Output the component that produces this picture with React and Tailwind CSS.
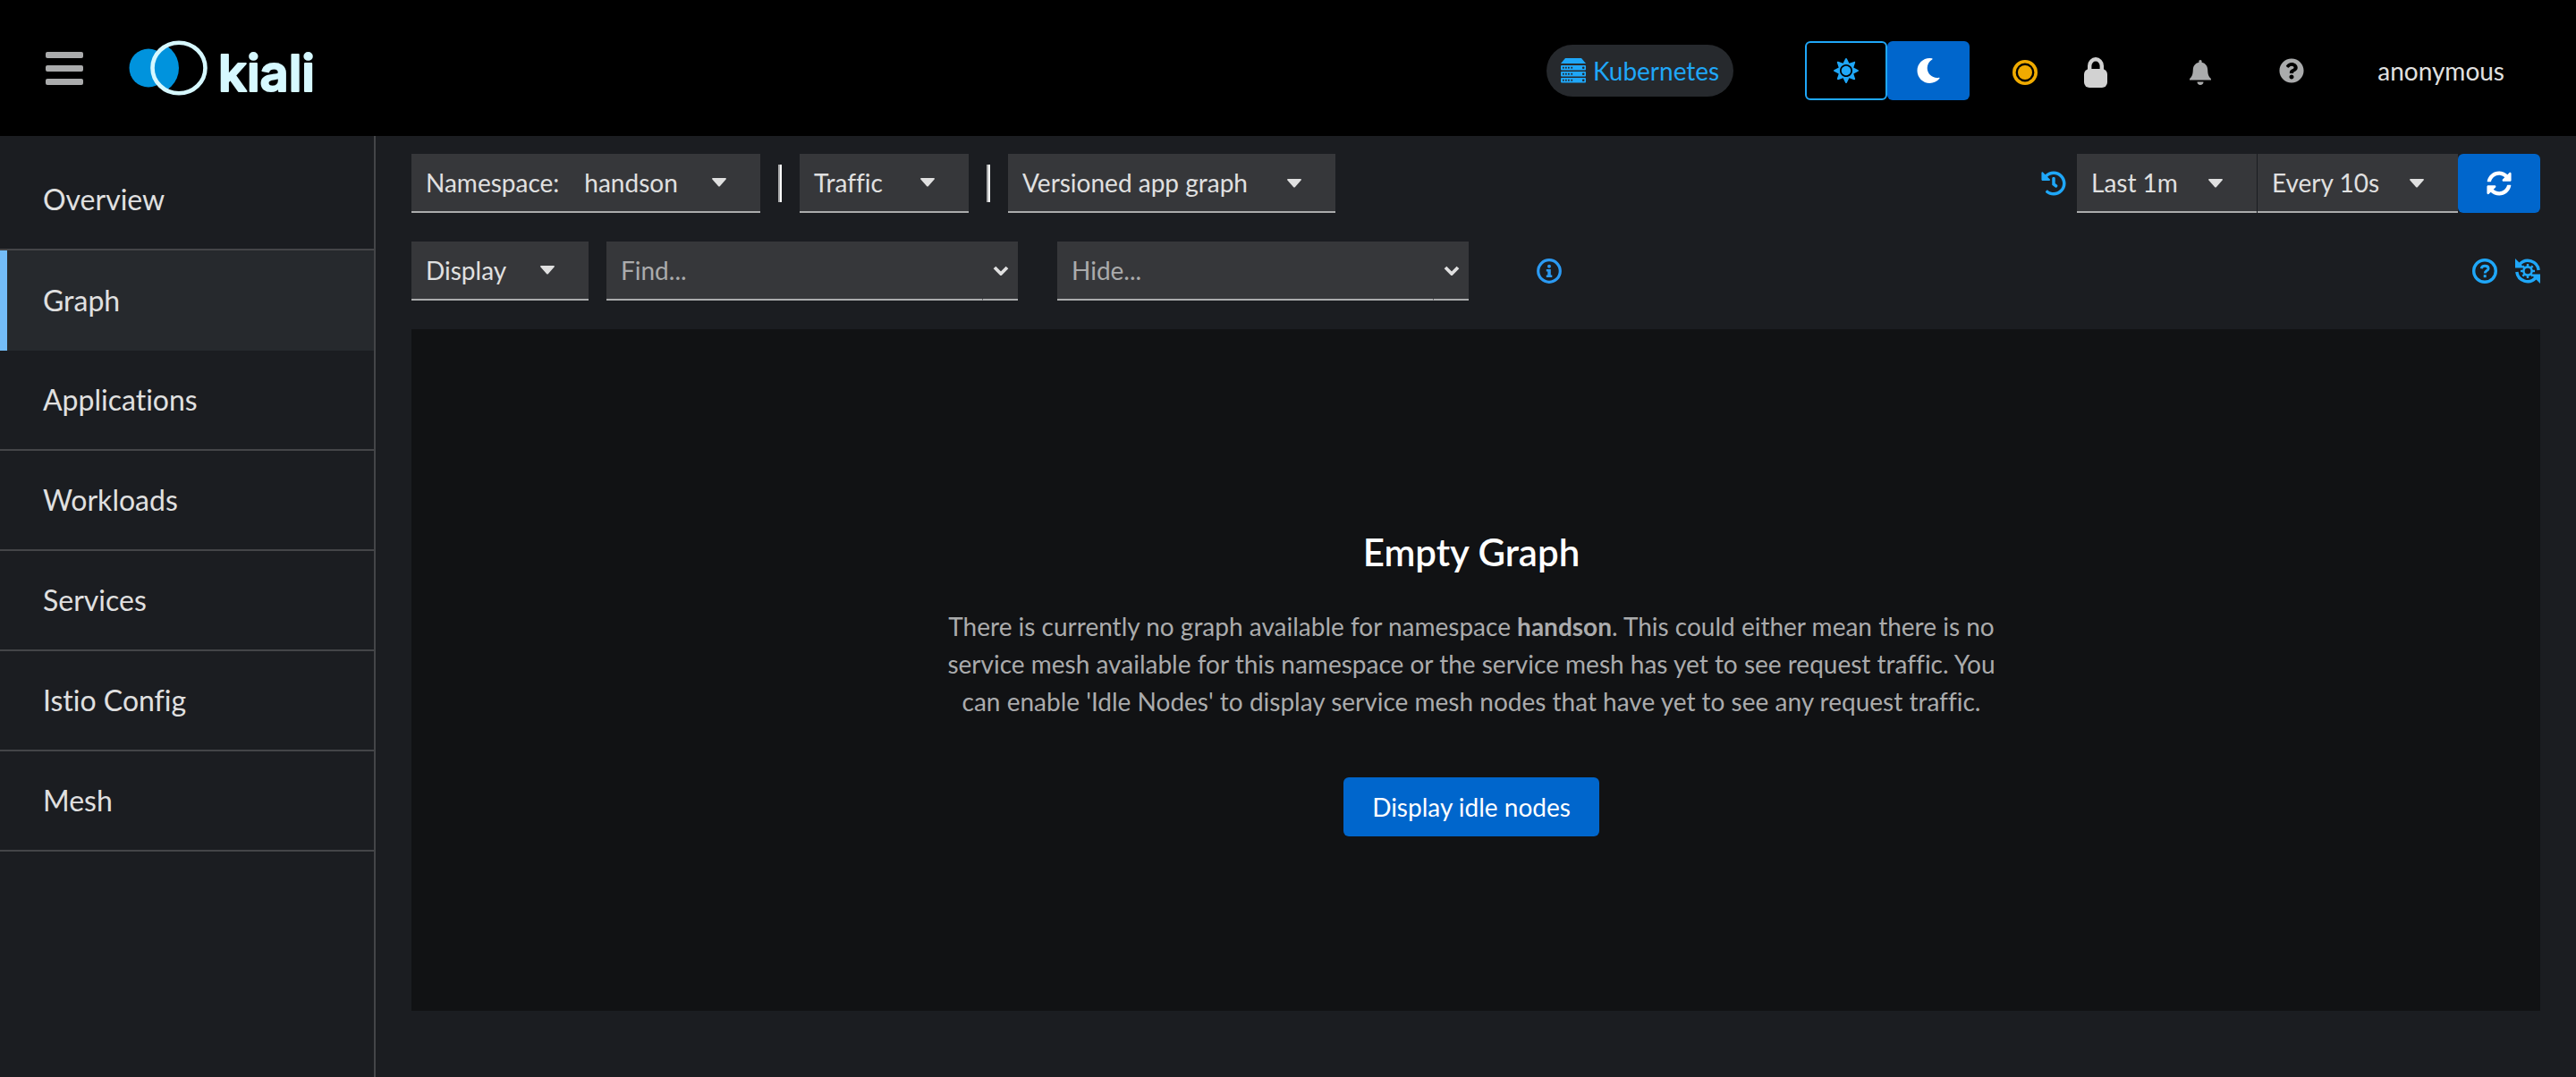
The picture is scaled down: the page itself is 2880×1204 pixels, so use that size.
import { FaHistory, FaMoon, FaQuestionCircle, FaSun, FaSyncAlt } from "react-icons/fa";

const NAV = ["Overview", "Graph", "Applications", "Workloads", "Services", "Istio Config", "Mesh"];

function Logo() {
  return (
    <svg className="h-[76px] w-[216px]" viewBox="0 0 216 76" role="img" aria-label="kiali">
      <defs>
        <clipPath id="ring">
          <ellipse cx="56" cy="38" rx="30" ry="29" />
        </clipPath>
      </defs>
      <circle cx="22" cy="38" r="21.5" fill="#0093dd" />
      <ellipse cx="56" cy="38" rx="29.5" ry="28.5" fill="#000" />
      <circle cx="26.5" cy="38" r="29.5" fill="#0093dd" clipPath="url(#ring)" />
      <ellipse cx="56" cy="38" rx="29.5" ry="28.3" fill="none" stroke="#d6f8ff" strokeWidth="4.6" />
      <text
        x="100"
        y="64"
        className="font-['Inter',sans-serif] text-[56px] font-semibold"
        fill="#d6f8ff"
        stroke="#d6f8ff"
        strokeWidth="2"
        strokeLinejoin="round"
      >
        kiali
      </text>
    </svg>
  );
}

function ServerIcon() {
  return (
    <svg className="size-7" viewBox="0 0 28 28" fill="currentColor" aria-hidden="true">
      <path d="M5 0h18l5 6H0z" />
      {[8, 15, 22].map((y) => (
        <g key={y}>
          <rect x="0" y={y} width="28" height="5.4" rx="1" />
          <g fill="#26292d">
            <rect x="2" y={y + 1.8} width="1.7" height="1.8" />
            <rect x="5" y={y + 1.8} width="1.7" height="1.8" />
            <rect x="8" y={y + 1.8} width="1.7" height="1.8" />
            <rect x="11.4" y={y + 1.8} width="1.7" height="1.8" />
            <circle cx="25.2" cy={y + 2.7} r="1.3" />
          </g>
        </g>
      ))}
    </svg>
  );
}

function DotIcon() {
  return (
    <svg className="size-7" viewBox="0 0 28 28" aria-hidden="true">
      <circle cx="14" cy="14" r="12.2" fill="none" stroke="#f0ab00" strokeWidth="3.6" />
      <circle cx="14" cy="14" r="8" fill="#f0ab00" />
    </svg>
  );
}

function LockIcon() {
  return (
    <svg className="h-[34px] w-[26px]" viewBox="0 0 26 34" aria-hidden="true">
      <path d="M6.2 16V9.5a6.8 7.2 0 0 1 13.6 0V16" fill="none" stroke="#d2d2d2" strokeWidth="4.4" />
      <rect x="0" y="13" width="26" height="21" rx="6" fill="#d2d2d2" />
    </svg>
  );
}

function BellIcon() {
  return (
    <svg className="h-7 w-6" viewBox="0 0 24 28" fill="#aaabac" aria-hidden="true">
      <path d="M12 0c1.1 0 1.6.8 1.6 1.8v.9c4.3.8 6.4 4.2 6.6 8.2.2 5 .8 7.2 3.3 9.5.5.5.5 1 .5 2.1H0c0-1.1 0-1.6.5-2.1 2.500-2.300 3.100-4.500 3.300-9.500.2-4 2.300-7.400 6.600-8.200v-.9C10.400.8 10.900 0 12 0z" />
      <path d="M8.500 24.400h7c0 2-1.500 3.500-3.500 3.500s-3.500-1.500-3.500-3.500z" />
    </svg>
  );
}

function InfoIcon() {
  return (
    <svg className="size-7" viewBox="0 0 28 28" fill="#2b9af3" aria-hidden="true">
      <circle cx="14" cy="14" r="12.3" fill="none" stroke="#2b9af3" strokeWidth="3.2" />
      <circle cx="14" cy="8.8" r="2" />
      <path d="M10.800 12h5v6.500h1.500V21h-6.500v-2.500h1.500v-4h-1.500z" />
    </svg>
  );
}

function HelpIcon() {
  return (
    <svg className="size-7" viewBox="0 0 28 28" fill="none" stroke="currentColor" aria-hidden="true">
      <circle cx="14" cy="14" r="12.3" strokeWidth="3.4" />
      <path d="M10.200 11.200c.4-2 1.800-3 3.900-3 2.300 0 4 1.100 4 3 0 2.500-3.900 2.300-3.900 5.300" strokeWidth="2.900" />
      <path d="M14.200 18.200v3" strokeWidth="3" />
    </svg>
  );
}

function SyncGearIcon() {
  return (
    <svg className="size-7" viewBox="0 0 28 28" fill="currentColor" aria-hidden="true">
      <path d="M5 6.500A12.200 12.200 0 0 1 26.200 13" fill="none" stroke="currentColor" strokeWidth="3.4" />
      <path d="M23 21.500A12.200 12.200 0 0 1 1.800 15" fill="none" stroke="currentColor" strokeWidth="3.4" />
      <path d="M0 0l10.500 10.500H0z" />
      <path d="M28 28L17.500 17.500H28z" />
      <circle cx="14" cy="14" r="4.6" fill="none" stroke="currentColor" strokeWidth="2.6" />
      {[0, 45, 90, 135, 180, 225, 270, 315].map((a) => (
        <rect key={a} x="12.8" y="6" width="2.4" height="3" transform={`rotate(${a} 14 14)`} />
      ))}
    </svg>
  );
}

function Chevron() {
  return (
    <svg className="h-[11px] w-[18px]" viewBox="0 0 18 11" aria-hidden="true">
      <path d="M2 2l7 7 7-7" fill="none" stroke="#e0e0e0" strokeWidth="3.8" />
    </svg>
  );
}

function Caret() {
  return (
    <svg className="h-[10px] w-4 shrink-0" viewBox="0 0 16 10" fill="#e0e0e0" aria-hidden="true">
      <path d="M1 0h14c1 0 1.200 1 .6 1.600L8.800 9.200c-.5.5-1.100.5-1.600 0L.4 1.600C-.2 1 0 0 1 0z" />
    </svg>
  );
}

function Toggle({ children, className }) {
  return (
    <button
      type="button"
      aria-haspopup="menu"
      className={`flex h-[66px] items-center justify-between border-b-2 border-[#aaabac] bg-[#36373a] pr-[38px] pl-4 ${className}`}
    >
      <span className="flex gap-7">{children}</span>
      <Caret />
    </button>
  );
}

function Select({ label, options, className }) {
  return (
    <div className={`relative h-[66px] ${className}`}>
      <select
        aria-label={label}
        className="size-full appearance-none border-b-2 border-[#aaabac] bg-[#36373a] pr-14 pl-4 outline-none"
      >
        {options.map((o) => (
          <option key={o}>{o}</option>
        ))}
      </select>
      <span className="pointer-events-none absolute inset-y-0 right-[38px] flex items-center">
        <Caret />
      </span>
    </div>
  );
}

function Search({ label }) {
  return (
    <div className="flex h-[66px] w-[460px]">
      <input
        type="text"
        aria-label={label}
        placeholder={`${label}...`}
        className="min-w-0 flex-1 border-b-2 border-[#aaabac] bg-[#36373a] pl-4 outline-none placeholder:text-[#aaabac]"
      />
      <button
        type="button"
        aria-label={`${label} presets`}
        className="flex w-10 items-center justify-center border-b-2 border-l border-b-[#aaabac] border-l-[#36373a] bg-[#36373a]"
      >
        <Chevron />
      </button>
    </div>
  );
}

function Divider() {
  return <span className="mx-5 h-[42px] w-1 border-r-2 border-white bg-[#aaabac]" />;
}

export default function App() {
  return (
    <div className="flex min-h-screen flex-col bg-[#1b1d21] font-['Lato',sans-serif] text-[28px] leading-[42px] text-[#e0e0e0] [font-variant-ligatures:none]">
      <header className="flex h-[152px] items-center bg-black pr-20 pl-[51px]">
        <button type="button" aria-label="Global navigation" className="flex w-[42px] flex-col gap-2">
          <span className="h-[7px] rounded-xs bg-[#aaabac]" />
          <span className="h-[7px] rounded-xs bg-[#aaabac]" />
          <span className="h-[7px] rounded-xs bg-[#aaabac]" />
        </button>
        <a href="#home" className="ml-[51px]">
          <Logo />
        </a>
        <div className="ml-auto flex items-center pt-1.5">
          <span className="flex h-[58px] items-center gap-2 rounded-full bg-[#26292d] px-4 text-[#1fa7f8]">
            <ServerIcon />
            Kubernetes
          </span>
          <div className="ml-20 flex">
            <button
              type="button"
              aria-label="Light theme"
              className="flex h-[66px] w-[92px] items-center justify-center rounded-md border-2 border-[#1fa7f8] text-[#1fa7f8]"
            >
              <FaSun />
            </button>
            <button
              type="button"
              aria-label="Dark theme"
              className="flex h-[66px] w-[92px] items-center justify-center rounded-md bg-[#0066cc] text-white"
            >
              <FaMoon />
            </button>
          </div>
          <div className="ml-12 flex items-center text-[#aaabac]">
            <span className="pt-1">
              <DotIcon />
            </span>
            <span className="ml-[52px] pt-1">
              <LockIcon />
            </span>
            <button type="button" aria-label="Notifications" className="ml-[92px] pt-1">
              <BellIcon />
            </button>
            <button type="button" aria-label="Help" className="ml-[76px]">
              <FaQuestionCircle />
            </button>
          </div>
          <button type="button" className="ml-[82px]">
            anonymous
          </button>
        </div>
      </header>

      <div className="flex flex-1">
        <nav className="w-[420px] shrink-0 border-r-2 border-[#444548] pt-4">
          <ul className="text-[32px] leading-[48px]">
            {NAV.map((item) => (
              <li key={item}>
                <a
                  href={`#${item}`}
                  aria-current={item === "Graph" ? "page" : undefined}
                  className={
                    item === "Graph"
                      ? "flex h-28 items-center border-l-8 border-[#73bcf7] bg-[#26292d] pl-10"
                      : "flex h-28 items-center border-b-2 border-[#444548] pl-12"
                  }
                >
                  {item}
                </a>
              </li>
            ))}
          </ul>
        </nav>

        <main className="flex min-w-0 flex-1 flex-col px-10 pt-5 pb-[74px]">
          <div className="flex items-center">
            <Toggle className="w-[390px]">
              <span>Namespace:</span>
              <span>handson</span>
            </Toggle>
            <Divider />
            <Toggle className="w-[189px]">Traffic</Toggle>
            <Divider />
            <Select
              label="Graph type"
              options={["Versioned app graph", "App graph", "Service graph", "Workload graph"]}
              className="w-[366px]"
            />
            <div className="ml-auto flex items-center">
              <button type="button" aria-label="Replay" className="mr-3 text-[#1fa7f8]">
                <FaHistory />
              </button>
              <Select label="Duration" options={["Last 1m", "Last 5m", "Last 10m"]} className="mr-px w-[201px]" />
              <Select label="Refresh interval" options={["Every 10s", "Every 30s", "Every 1m"]} className="w-[224px]" />
              <button
                type="button"
                aria-label="Refresh"
                className="flex h-[66px] w-[92px] items-center justify-center rounded-md bg-[#0066cc] text-white"
              >
                <FaSyncAlt />
              </button>
            </div>
          </div>

          <div className="mt-8 flex items-center">
            <Toggle className="w-[198px]">Display</Toggle>
            <div className="ml-5 flex gap-11">
              <Search label="Find" />
              <Search label="Hide" />
            </div>
            <button type="button" aria-label="Find and hide help" className="ml-[76px]">
              <InfoIcon />
            </button>
            <div className="ml-auto flex items-center gap-5 text-[#1fa7f8]">
              <button type="button" aria-label="Graph tour">
                <HelpIcon />
              </button>
              <button type="button" aria-label="Reset settings">
                <SyncGearIcon />
              </button>
            </div>
          </div>

          <section className="mt-8 flex flex-1 flex-col items-center justify-center bg-[#111214] pt-7 pr-2.5 text-center">
            <h1 className="text-[42px] leading-[52px] font-semibold text-white">Empty Graph</h1>
            <p className="mt-9 max-w-[1200px] text-[#aaabac]">
              There is currently no graph available for namespace <b>handson</b>. This could either mean there is no
              service mesh available for this namespace or the service mesh has yet to see request traffic. You can
              enable 'Idle Nodes' to display service mesh nodes that have yet to see any request traffic.
            </p>
            <button type="button" className="mt-16 h-[66px] rounded-md bg-[#0066cc] px-8 text-white">
              Display idle nodes
            </button>
          </section>
        </main>
      </div>
    </div>
  );
}
